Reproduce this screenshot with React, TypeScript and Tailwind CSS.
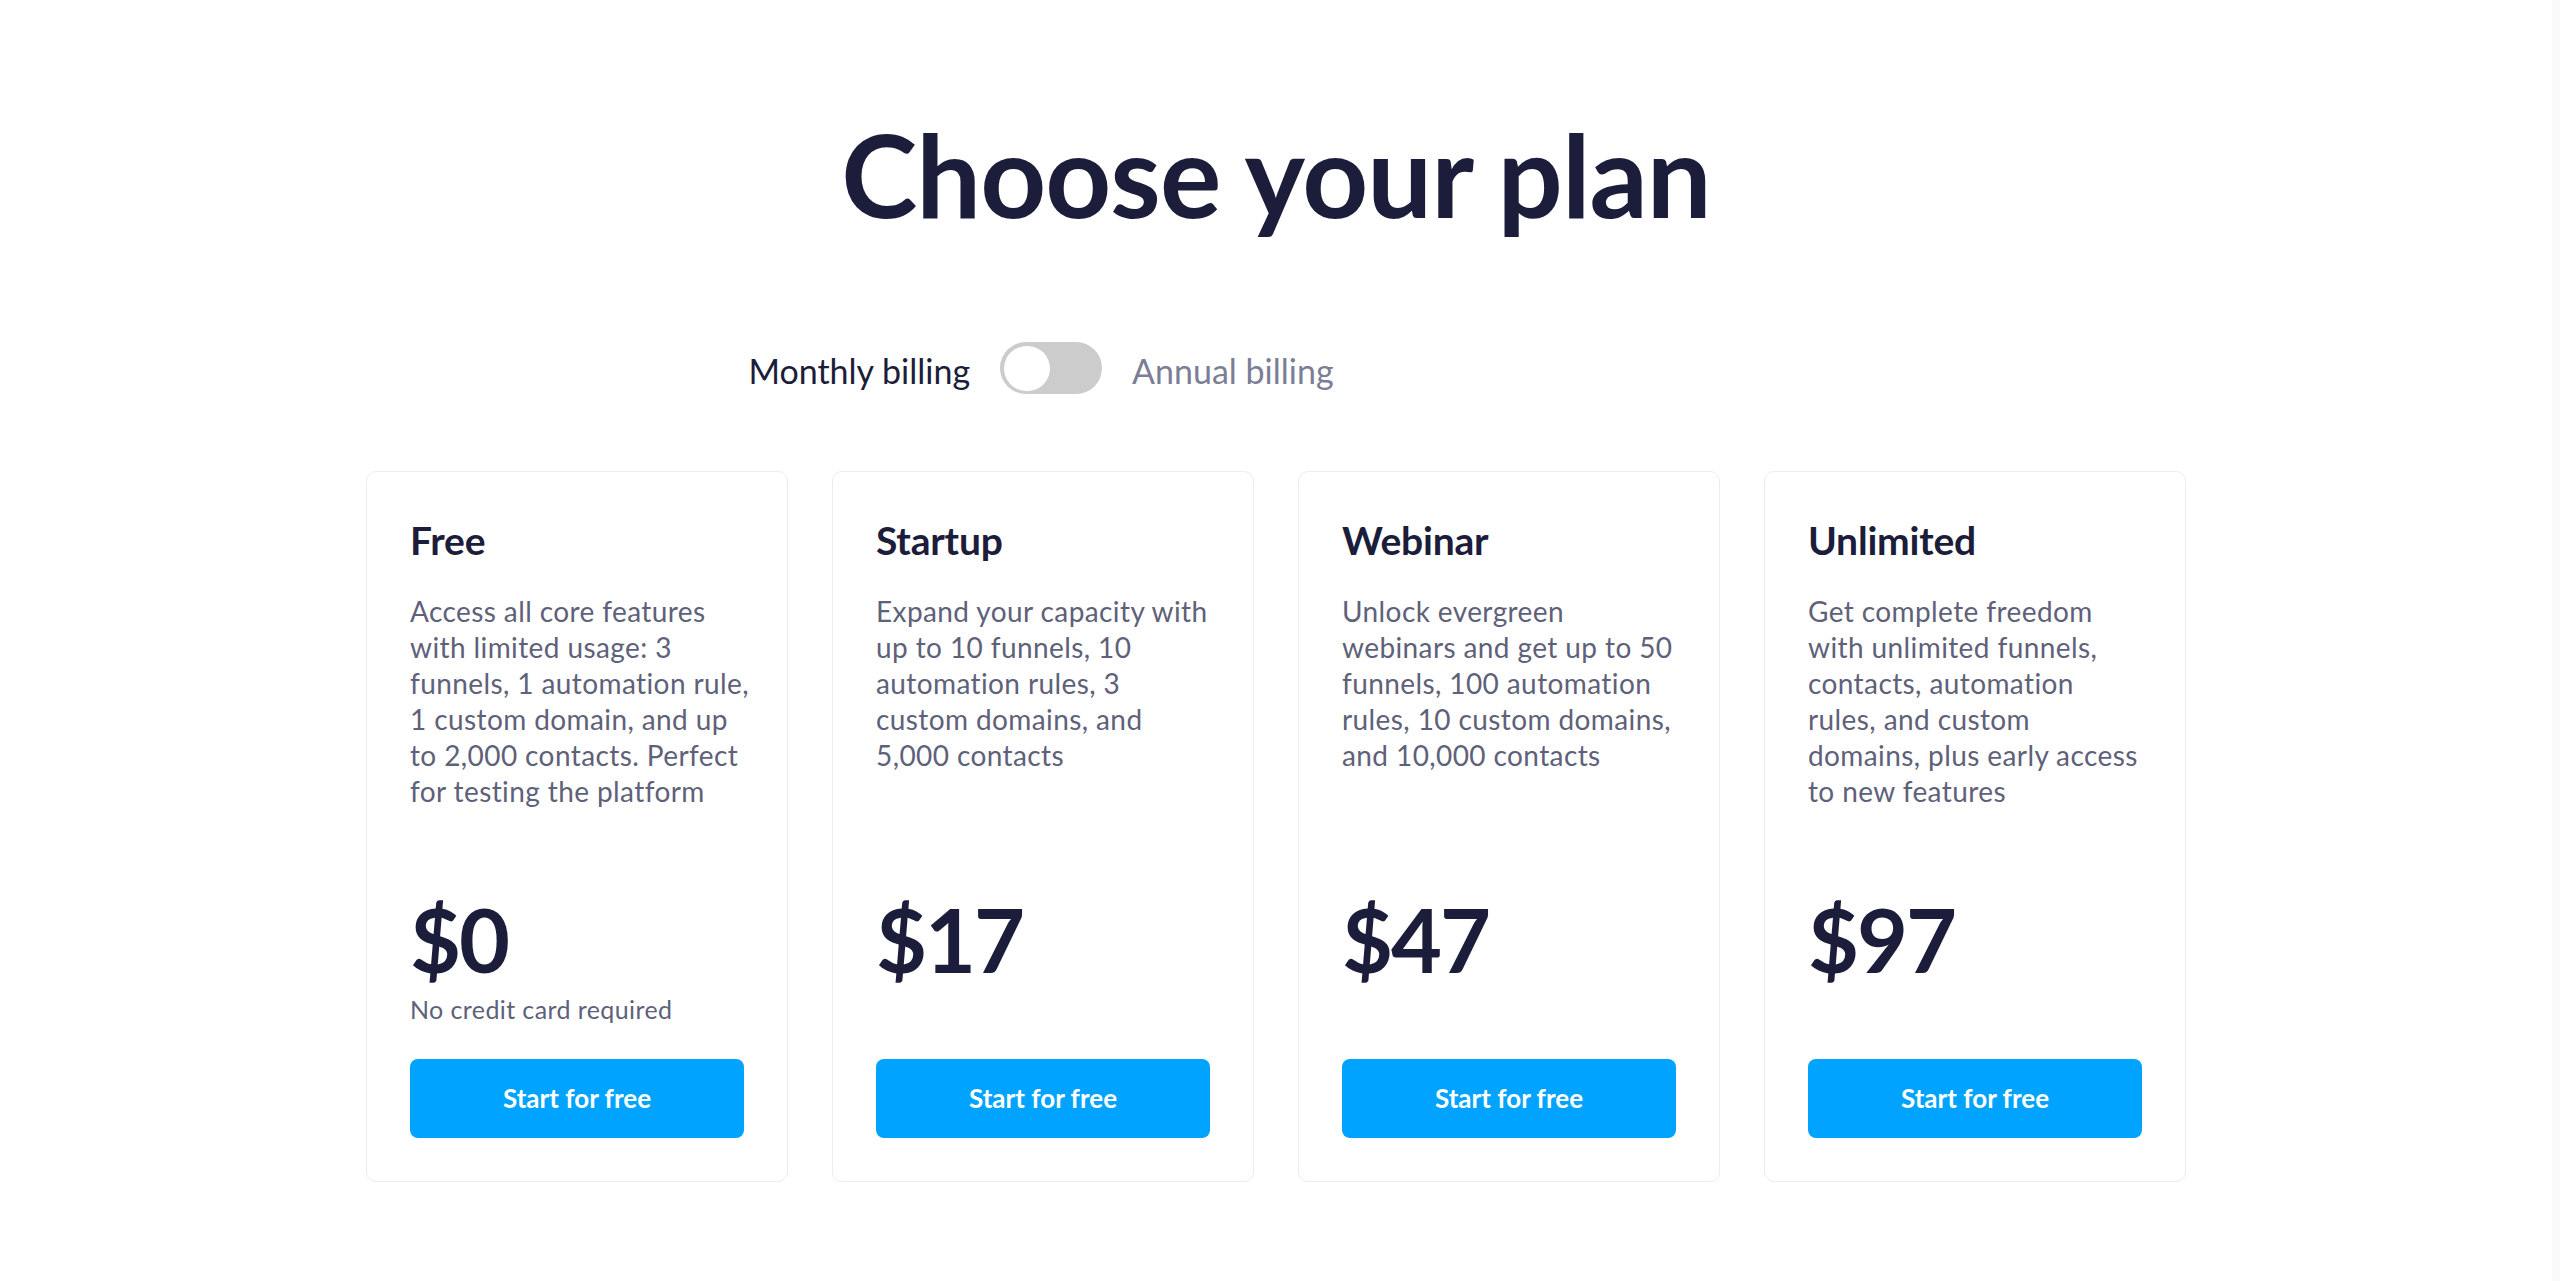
import React from "react";

type Plan = {
  name: string;
  lines: string[];
  price: string;
  note?: string;
};

const plans: Plan[] = [
  {
    name: "Free",
    lines: [
      "Access all core features",
      "with limited usage: 3",
      "funnels, 1 automation rule,",
      "1 custom domain, and up",
      "to 2,000 contacts. Perfect",
      "for testing the platform",
    ],
    price: "$0",
    note: "No credit card required",
  },
  {
    name: "Startup",
    lines: [
      "Expand your capacity with",
      "up to 10 funnels, 10",
      "automation rules, 3",
      "custom domains, and",
      "5,000 contacts",
    ],
    price: "$17",
  },
  {
    name: "Webinar",
    lines: [
      "Unlock evergreen",
      "webinars and get up to 50",
      "funnels, 100 automation",
      "rules, 10 custom domains,",
      "and 10,000 contacts",
    ],
    price: "$47",
  },
  {
    name: "Unlimited",
    lines: [
      "Get complete freedom",
      "with unlimited funnels,",
      "contacts, automation",
      "rules, and custom",
      "domains, plus early access",
      "to new features",
    ],
    price: "$97",
  },
];

function Card({ plan }: { plan: Plan }) {
  return (
    <div className="flex flex-col rounded-[10px] border border-[#ececf1] bg-white px-[43px] pb-[43px] pt-[45px]">
      <h2 className="text-[39px] leading-[46px] font-bold text-[#1b1d3a] tracking-[-0.2px]">
        {plan.name}
      </h2>
      <div className="mt-[30px] flex-1 text-[28px] leading-[36px] tracking-[0.4px] text-[#5e6179]">
        {plan.lines.map((l, i) => (
          <span key={i} className="block whitespace-nowrap">
            {l}
          </span>
        ))}
      </div>
      <div className="mt-[86px] text-[88px] leading-[88px] font-bold text-[#1b1d3a] tracking-[-2px]">
        {plan.price}
      </div>
      <p className="mt-[11px] text-[25px] leading-[30px] tracking-[0.4px] text-[#5e6179]">
        {plan.note ?? "\u00a0"}
      </p>
      <button className="mt-[35px] h-[79px] w-full rounded-[8px] bg-[#00a3ff] text-[26px] font-bold text-white">
        Start for free
      </button>
    </div>
  );
}

export default function App() {
  return (
    <div
      className="flex min-h-[1281px] w-full bg-white"
      style={{ fontFamily: "Lato, 'Noto Sans', sans-serif" }}
    >
      <main className="flex flex-1 flex-col items-center">
        <h1 className="mt-[115px] text-[115px] leading-[117px] font-bold text-[#1b1d3a] tracking-[-1px]">
          Choose your plan
        </h1>
        <div className="mt-[110px] flex items-start gap-[30px]">
          <span className="pt-[3px] text-[34px] leading-[52px] text-[#1b1d3a]">
            Monthly billing
          </span>
          <div className="flex h-[52px] w-[102px] items-center rounded-full bg-[#cccccc] p-[4px]">
            <div className="h-[45px] w-[46px] rounded-full bg-white" />
          </div>
          <span className="pt-[3px] text-[34px] leading-[52px] text-[#7b7e95]">
            Annual billing
          </span>
          <span className="invisible w-[440px]" />
        </div>
        <div className="mt-[74px] grid w-[1820px] grid-cols-4 gap-[44px]">
          {plans.map((p) => (
            <Card key={p.name} plan={p} />
          ))}
        </div>
      </main>
      <div className="w-[8px] bg-[#f9f9f9]" />
    </div>
  );
}
